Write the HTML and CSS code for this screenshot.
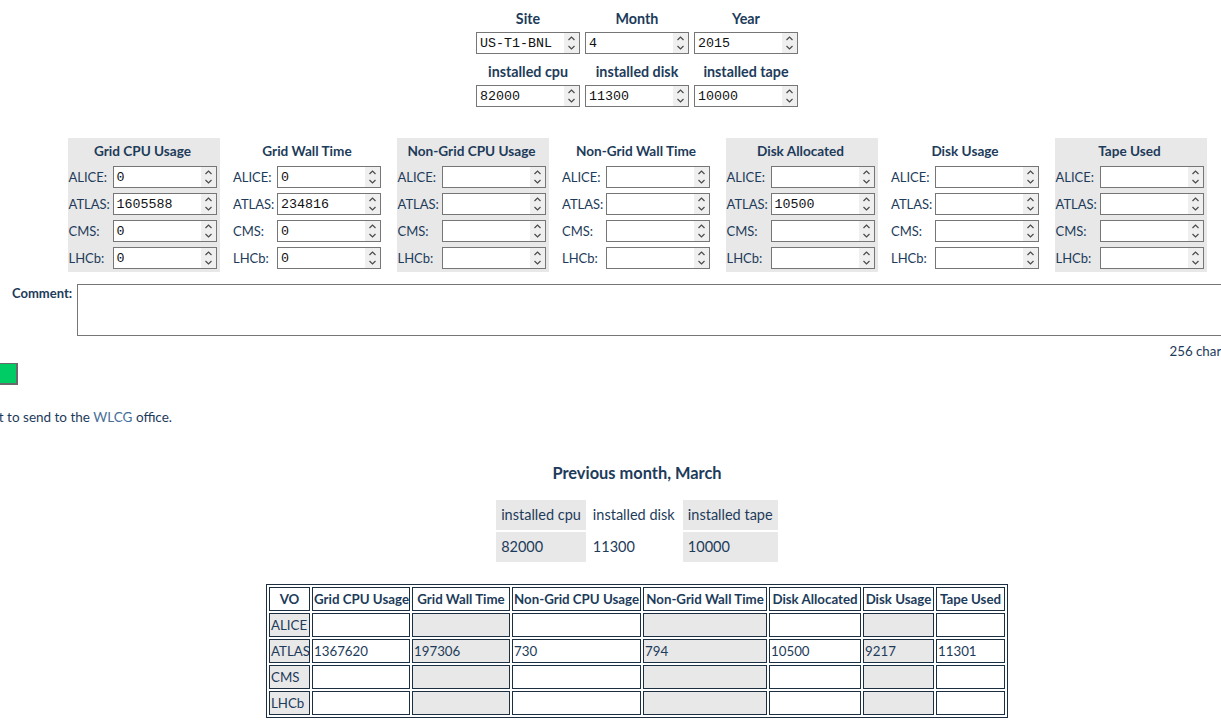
FILE: index.html
```html
<!DOCTYPE html>
<html>
<head>
<meta charset="utf-8">
<title>WLCG accounting</title>
<link rel="stylesheet" href="styles.css">
</head>
<body>
<div class="page">
  <div class="top">
    <div class="lbl">Site</div>
    <div class="lbl">Month</div>
    <div class="lbl">Year</div>
    <div class="num"><input value="US-T1-BNL"><span class="spin"><svg width="15" height="20" viewBox="0 0 15 20"><path d="M4.5 7 L7.5 4 L10.5 7 M4.5 13 L7.5 16 L10.5 13"/></svg></span></div>
    <div class="num"><input value="4"><span class="spin"><svg width="15" height="20" viewBox="0 0 15 20"><path d="M4.5 7 L7.5 4 L10.5 7 M4.5 13 L7.5 16 L10.5 13"/></svg></span></div>
    <div class="num"><input value="2015"><span class="spin"><svg width="15" height="20" viewBox="0 0 15 20"><path d="M4.5 7 L7.5 4 L10.5 7 M4.5 13 L7.5 16 L10.5 13"/></svg></span></div>
    <div class="lbl">installed cpu</div>
    <div class="lbl">installed disk</div>
    <div class="lbl">installed tape</div>
    <div class="num"><input value="82000"><span class="spin"><svg width="15" height="20" viewBox="0 0 15 20"><path d="M4.5 7 L7.5 4 L10.5 7 M4.5 13 L7.5 16 L10.5 13"/></svg></span></div>
    <div class="num"><input value="11300"><span class="spin"><svg width="15" height="20" viewBox="0 0 15 20"><path d="M4.5 7 L7.5 4 L10.5 7 M4.5 13 L7.5 16 L10.5 13"/></svg></span></div>
    <div class="num"><input value="10000"><span class="spin"><svg width="15" height="20" viewBox="0 0 15 20"><path d="M4.5 7 L7.5 4 L10.5 7 M4.5 13 L7.5 16 L10.5 13"/></svg></span></div>
  </div>

  <div class="blocks">
    <div class="blk g">
      <h3>Grid CPU Usage</h3>
      <div class="row"><label>ALICE:</label><div class="num"><input value="0"><span class="spin"><svg width="15" height="20" viewBox="0 0 15 20"><path d="M4.5 7 L7.5 4 L10.5 7 M4.5 13 L7.5 16 L10.5 13"/></svg></span></div></div>
      <div class="row"><label>ATLAS:</label><div class="num"><input value="1605588"><span class="spin"><svg width="15" height="20" viewBox="0 0 15 20"><path d="M4.5 7 L7.5 4 L10.5 7 M4.5 13 L7.5 16 L10.5 13"/></svg></span></div></div>
      <div class="row"><label>CMS:</label><div class="num"><input value="0"><span class="spin"><svg width="15" height="20" viewBox="0 0 15 20"><path d="M4.5 7 L7.5 4 L10.5 7 M4.5 13 L7.5 16 L10.5 13"/></svg></span></div></div>
      <div class="row"><label>LHCb:</label><div class="num"><input value="0"><span class="spin"><svg width="15" height="20" viewBox="0 0 15 20"><path d="M4.5 7 L7.5 4 L10.5 7 M4.5 13 L7.5 16 L10.5 13"/></svg></span></div></div>
    </div>
    <div class="blk">
      <h3>Grid Wall Time</h3>
      <div class="row"><label>ALICE:</label><div class="num"><input value="0"><span class="spin"><svg width="15" height="20" viewBox="0 0 15 20"><path d="M4.5 7 L7.5 4 L10.5 7 M4.5 13 L7.5 16 L10.5 13"/></svg></span></div></div>
      <div class="row"><label>ATLAS:</label><div class="num"><input value="234816"><span class="spin"><svg width="15" height="20" viewBox="0 0 15 20"><path d="M4.5 7 L7.5 4 L10.5 7 M4.5 13 L7.5 16 L10.5 13"/></svg></span></div></div>
      <div class="row"><label>CMS:</label><div class="num"><input value="0"><span class="spin"><svg width="15" height="20" viewBox="0 0 15 20"><path d="M4.5 7 L7.5 4 L10.5 7 M4.5 13 L7.5 16 L10.5 13"/></svg></span></div></div>
      <div class="row"><label>LHCb:</label><div class="num"><input value="0"><span class="spin"><svg width="15" height="20" viewBox="0 0 15 20"><path d="M4.5 7 L7.5 4 L10.5 7 M4.5 13 L7.5 16 L10.5 13"/></svg></span></div></div>
    </div>
    <div class="blk g">
      <h3>Non-Grid CPU Usage</h3>
      <div class="row"><label>ALICE:</label><div class="num"><input value=""><span class="spin"><svg width="15" height="20" viewBox="0 0 15 20"><path d="M4.5 7 L7.5 4 L10.5 7 M4.5 13 L7.5 16 L10.5 13"/></svg></span></div></div>
      <div class="row"><label>ATLAS:</label><div class="num"><input value=""><span class="spin"><svg width="15" height="20" viewBox="0 0 15 20"><path d="M4.5 7 L7.5 4 L10.5 7 M4.5 13 L7.5 16 L10.5 13"/></svg></span></div></div>
      <div class="row"><label>CMS:</label><div class="num"><input value=""><span class="spin"><svg width="15" height="20" viewBox="0 0 15 20"><path d="M4.5 7 L7.5 4 L10.5 7 M4.5 13 L7.5 16 L10.5 13"/></svg></span></div></div>
      <div class="row"><label>LHCb:</label><div class="num"><input value=""><span class="spin"><svg width="15" height="20" viewBox="0 0 15 20"><path d="M4.5 7 L7.5 4 L10.5 7 M4.5 13 L7.5 16 L10.5 13"/></svg></span></div></div>
    </div>
    <div class="blk">
      <h3>Non-Grid Wall Time</h3>
      <div class="row"><label>ALICE:</label><div class="num"><input value=""><span class="spin"><svg width="15" height="20" viewBox="0 0 15 20"><path d="M4.5 7 L7.5 4 L10.5 7 M4.5 13 L7.5 16 L10.5 13"/></svg></span></div></div>
      <div class="row"><label>ATLAS:</label><div class="num"><input value=""><span class="spin"><svg width="15" height="20" viewBox="0 0 15 20"><path d="M4.5 7 L7.5 4 L10.5 7 M4.5 13 L7.5 16 L10.5 13"/></svg></span></div></div>
      <div class="row"><label>CMS:</label><div class="num"><input value=""><span class="spin"><svg width="15" height="20" viewBox="0 0 15 20"><path d="M4.5 7 L7.5 4 L10.5 7 M4.5 13 L7.5 16 L10.5 13"/></svg></span></div></div>
      <div class="row"><label>LHCb:</label><div class="num"><input value=""><span class="spin"><svg width="15" height="20" viewBox="0 0 15 20"><path d="M4.5 7 L7.5 4 L10.5 7 M4.5 13 L7.5 16 L10.5 13"/></svg></span></div></div>
    </div>
    <div class="blk g">
      <h3>Disk Allocated</h3>
      <div class="row"><label>ALICE:</label><div class="num"><input value=""><span class="spin"><svg width="15" height="20" viewBox="0 0 15 20"><path d="M4.5 7 L7.5 4 L10.5 7 M4.5 13 L7.5 16 L10.5 13"/></svg></span></div></div>
      <div class="row"><label>ATLAS:</label><div class="num"><input value="10500"><span class="spin"><svg width="15" height="20" viewBox="0 0 15 20"><path d="M4.5 7 L7.5 4 L10.5 7 M4.5 13 L7.5 16 L10.5 13"/></svg></span></div></div>
      <div class="row"><label>CMS:</label><div class="num"><input value=""><span class="spin"><svg width="15" height="20" viewBox="0 0 15 20"><path d="M4.5 7 L7.5 4 L10.5 7 M4.5 13 L7.5 16 L10.5 13"/></svg></span></div></div>
      <div class="row"><label>LHCb:</label><div class="num"><input value=""><span class="spin"><svg width="15" height="20" viewBox="0 0 15 20"><path d="M4.5 7 L7.5 4 L10.5 7 M4.5 13 L7.5 16 L10.5 13"/></svg></span></div></div>
    </div>
    <div class="blk">
      <h3>Disk Usage</h3>
      <div class="row"><label>ALICE:</label><div class="num"><input value=""><span class="spin"><svg width="15" height="20" viewBox="0 0 15 20"><path d="M4.5 7 L7.5 4 L10.5 7 M4.5 13 L7.5 16 L10.5 13"/></svg></span></div></div>
      <div class="row"><label>ATLAS:</label><div class="num"><input value=""><span class="spin"><svg width="15" height="20" viewBox="0 0 15 20"><path d="M4.5 7 L7.5 4 L10.5 7 M4.5 13 L7.5 16 L10.5 13"/></svg></span></div></div>
      <div class="row"><label>CMS:</label><div class="num"><input value=""><span class="spin"><svg width="15" height="20" viewBox="0 0 15 20"><path d="M4.5 7 L7.5 4 L10.5 7 M4.5 13 L7.5 16 L10.5 13"/></svg></span></div></div>
      <div class="row"><label>LHCb:</label><div class="num"><input value=""><span class="spin"><svg width="15" height="20" viewBox="0 0 15 20"><path d="M4.5 7 L7.5 4 L10.5 7 M4.5 13 L7.5 16 L10.5 13"/></svg></span></div></div>
    </div>
    <div class="blk g">
      <h3>Tape Used</h3>
      <div class="row"><label>ALICE:</label><div class="num"><input value=""><span class="spin"><svg width="15" height="20" viewBox="0 0 15 20"><path d="M4.5 7 L7.5 4 L10.5 7 M4.5 13 L7.5 16 L10.5 13"/></svg></span></div></div>
      <div class="row"><label>ATLAS:</label><div class="num"><input value=""><span class="spin"><svg width="15" height="20" viewBox="0 0 15 20"><path d="M4.5 7 L7.5 4 L10.5 7 M4.5 13 L7.5 16 L10.5 13"/></svg></span></div></div>
      <div class="row"><label>CMS:</label><div class="num"><input value=""><span class="spin"><svg width="15" height="20" viewBox="0 0 15 20"><path d="M4.5 7 L7.5 4 L10.5 7 M4.5 13 L7.5 16 L10.5 13"/></svg></span></div></div>
      <div class="row"><label>LHCb:</label><div class="num"><input value=""><span class="spin"><svg width="15" height="20" viewBox="0 0 15 20"><path d="M4.5 7 L7.5 4 L10.5 7 M4.5 13 L7.5 16 L10.5 13"/></svg></span></div></div>
    </div>
  </div>

  <div class="comment">
    <label>Comment:</label>
    <textarea></textarea>
  </div>
  <div class="count">256 characters left</div>
  <button class="send" type="button"></button>
  <p class="note"><span>Click Submi</span>t to send to the <a href="#">WLCG</a> office.</p>

  <h2>Previous month, March</h2>
  <table class="prev">
    <tr><td class="g c1">installed cpu</td><td class="c2">installed disk</td><td class="g c3">installed tape</td></tr>
    <tr><td class="g c1">82000</td><td class="c2">11300</td><td class="g c3">10000</td></tr>
  </table>

  <table class="usage">
    <colgroup>
      <col style="width:41px"><col style="width:98px"><col style="width:98px"><col style="width:129px"><col style="width:124px"><col style="width:92px"><col style="width:71px"><col style="width:69px">
    </colgroup>
    <tr><th class="vo">VO</th><th>Grid CPU Usage</th><th>Grid Wall Time</th><th>Non-Grid CPU Usage</th><th>Non-Grid Wall Time</th><th>Disk Allocated</th><th>Disk Usage</th><th>Tape Used</th></tr>
    <tr><td class="g">ALICE</td><td></td><td class="g"></td><td></td><td class="g"></td><td></td><td class="g"></td><td></td></tr>
    <tr><td class="g">ATLAS</td><td>1367620</td><td class="g">197306</td><td>730</td><td class="g">794</td><td>10500</td><td class="g">9217</td><td>11301</td></tr>
    <tr><td class="g">CMS</td><td></td><td class="g"></td><td></td><td class="g"></td><td></td><td class="g"></td><td></td></tr>
    <tr><td class="g">LHCb</td><td></td><td class="g"></td><td></td><td class="g"></td><td></td><td class="g"></td><td></td></tr>
  </table>
</div>
</body>
</html>
```

FILE: styles.css
```css
html, body {
  margin: 0;
  padding: 0;
  background: #fff;
  overflow: hidden;
}
body {
  font-family: Lato, "Open Sans", sans-serif;
  font-size: 13px;
  color: #1d3b5a;
}
.page {
  width: 1330px;
  margin-left: -28px;
  padding: 8px;
  box-sizing: border-box;
}

/* top form */
.top {
  display: grid;
  grid-template-columns: repeat(3, 104px);
  column-gap: 5px;
  justify-content: center;
}
.top .lbl {
  font-weight: bold;
  font-size: 14.3px;
  text-align: center;
  line-height: 20px;
  height: 19px;
  padding-top: 1px;
  margin-bottom: 4px;
  white-space: nowrap;
}
.top .num { margin-bottom: 7px; }

/* number field with drawn spinner */
.num {
  display: flex;
  width: 104px;
  height: 22px;
  box-sizing: border-box;
  border: 1px solid #767676;
  background: #fff;
}
.num input {
  flex: 1;
  min-width: 0;
  border: 0;
  margin: 0;
  padding: 0 0 0 3px;
  font: 13.333px "Liberation Mono", monospace;
  color: #111;
  background: transparent;
  outline: none;
}
.spin {
  width: 15px;
  flex: none;
  background: #efefef;
  display: flex;
  align-items: center;
  justify-content: center;
}
.spin svg { display: block; }
.spin path {
  fill: none;
  stroke: #4a4a4a;
  stroke-width: 1.2;
}

/* usage blocks */
.blocks {
  display: flex;
  justify-content: center;
  gap: 12.5px;
  margin-top: 24px;
}
.blk {
  width: 152px;
  flex: none;
  box-sizing: border-box;
  padding: 3px 3px 3px 1px;
}
.blk.g { background: #e8e8e8; }
.blk h3 {
  margin: 0 0 5px;
  font-size: 13.6px;
  line-height: 20px;
  text-align: center;
  white-space: nowrap;
}
.row {
  display: flex;
  align-items: center;
  margin-bottom: 5px;
}
.row:last-child { margin-bottom: 0; }
.row label {
  width: 44px;
  flex: none;
  white-space: nowrap;
  padding-bottom: 1px;
}

/* comment */
.comment {
  display: flex;
  margin-top: 12px;
  padding-left: 32px;
}
.comment label {
  width: 65px;
  flex: none;
  font-weight: bold;
  padding-top: 1px;
}
.comment textarea {
  flex: 1;
  height: 52px;
  box-sizing: border-box;
  border: 1px solid #767676;
  margin: 0;
  resize: none;
}
.count {
  text-align: right;
  margin-top: 7px;
  line-height: 16px;
  padding-right: 15px;
  font-size: 13.3px;
}
.send {
  display: block;
  appearance: none;
  width: 38px;
  height: 22px;
  margin: 4px 0 0;
  padding: 0;
  background: #00cc66;
  border: 2px solid #6a6a6a;
  border-top-width: 1px;
}
.note {
  margin: 24px 0 0 -50px;
  line-height: 16px;
  font-size: 13.5px;
}
.note a {
  color: #47709a;
  text-decoration: none;
}

h2 {
  margin: 38px 0 0;
  font-size: 16.4px;
  line-height: 20px;
  text-align: center;
}

.prev {
  margin: 15px auto 0;
  border-spacing: 2px;
  font-size: 14.5px;
}
.prev td {
  height: 30px;
  padding: 0 5px 2px;
  box-sizing: border-box;
  white-space: nowrap;
}
.prev td.g { background: #e8e8e8; }
.prev .c1 { width: 89px; }
.prev .c2 { width: 93px; }
.prev .c3 { width: 95px; }

.usage {
  margin: 20px auto 0;
  width: 742px;
  table-layout: fixed;
  border: 1px solid #1c2e42;
  border-spacing: 2px;
  font-size: 13.3px;
}
.usage th, .usage td {
  border: 1px solid #1c2e42;
  height: 24px;
  box-sizing: border-box;
  padding: 0 1px;
  line-height: 20px;
  white-space: nowrap;
  overflow: hidden;
}
.usage th { text-align: center; font-weight: bold; }
.usage td { text-align: left; }
.usage td.g { background: #e8e8e8; }
```
